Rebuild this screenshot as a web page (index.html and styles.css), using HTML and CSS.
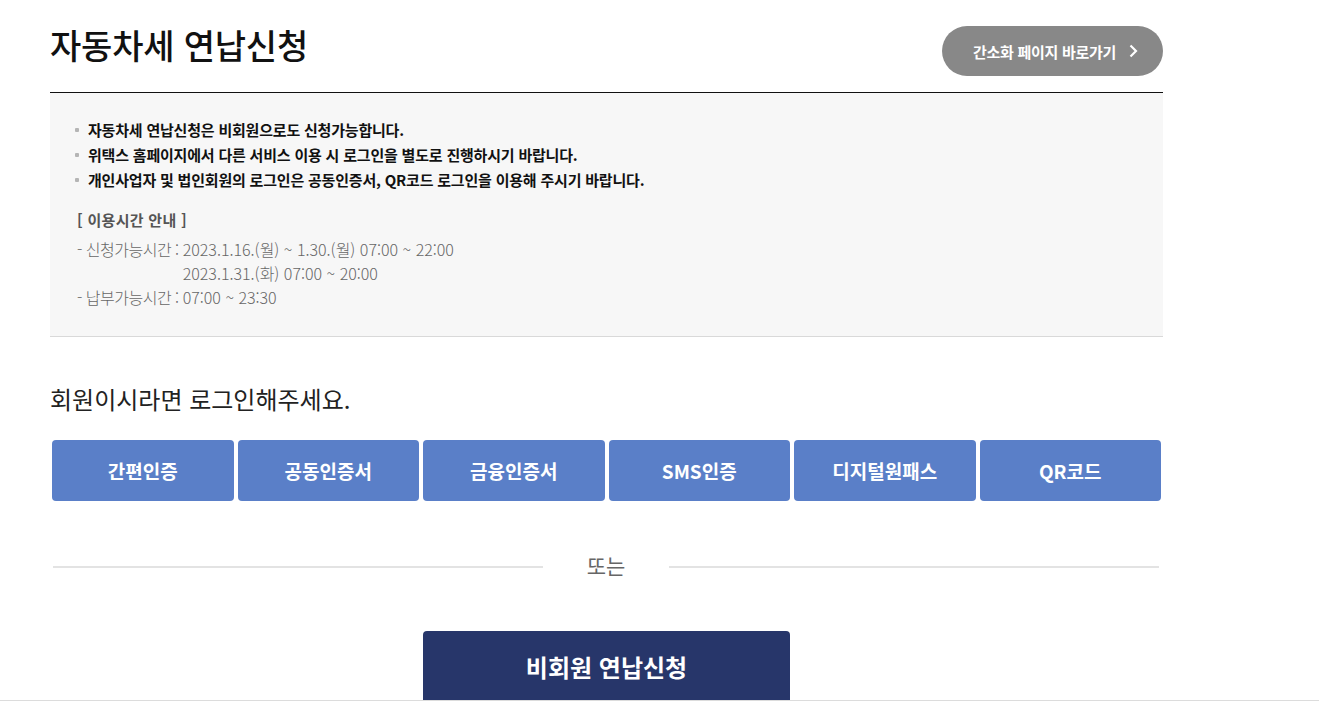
FILE: index.html
```html
<!DOCTYPE html>
<html lang="ko">
<head>
  <meta charset="UTF-8" />
  <title>자동차세 연납신청</title>
  <link rel="stylesheet" href="styles.css">
</head>
<body>
  <div class="wrap">
    <div class="page-head">
      <h1>자동차세 연납신청</h1>
      <a class="simple-btn" href="#">
        <span>간소화 페이지 바로가기</span>
        <svg width="10" height="14" viewBox="0 0 10 14"><polyline points="2.5,1.5 8,7 2.5,12.5" fill="none" stroke="#fff" stroke-width="2.2"/></svg>
      </a>
    </div>

    <div class="notice">
      <ul class="notice-list">
        <li>자동차세 연납신청은 비회원으로도 신청가능합니다.</li>
        <li>위택스 홈페이지에서 다른 서비스 이용 시 로그인을 별도로 진행하시기 바랍니다.</li>
        <li>개인사업자 및 법인회원의 로그인은 공동인증서, QR코드 로그인을 이용해 주시기 바랍니다.</li>
      </ul>
      <div class="time-info">
        <h3>[ 이용시간 안내 ]</h3>
        <div class="time-grid">
          <span class="label">- 신청가능시간 :</span>
          <span>2023.1.16.(월) ~ 1.30.(월) 07:00 ~ 22:00<br>2023.1.31.(화) 07:00 ~ 20:00</span>
          <span class="label">- 납부가능시간 :</span>
          <span>07:00 ~ 23:30</span>
        </div>
      </div>
    </div>

    <p class="login-title">회원이시라면 로그인해주세요.</p>
    <div class="login-btns">
      <button>간편인증</button>
      <button>공동인증서</button>
      <button>금융인증서</button>
      <button>SMS인증</button>
      <button>디지털원패스</button>
      <button>QR코드</button>
    </div>

    <div class="divider">
      <span class="line"></span>
      <span class="or">또는</span>
      <span class="line"></span>
    </div>

    <div class="guest">
      <button class="guest-btn">비회원 연납신청</button>
    </div>
  </div>
  <div class="bottom-bar"></div>
</body>
</html>
```

FILE: styles.css
```css
body {
  margin: 0;
  font-family: "Noto Sans CJK KR", "Noto Sans", sans-serif;
  color: #111;
  background: #fff;
}

.wrap {
  width: 1113px;
  margin-left: 50px;
}

/* header */
.page-head {
  height: 93px;
  box-sizing: border-box;
  padding-top: 25px;
  border-bottom: 1px solid #111;
  display: flex;
  justify-content: space-between;
  align-items: flex-start;
}

.page-head h1 {
  margin: 0;
  font-size: 34px;
  line-height: 40px;
  font-weight: 500;
  letter-spacing: -0.2px;
}

.simple-btn {
  margin-top: 1px;
  width: 221px;
  height: 50px;
  border-radius: 25px;
  background: #888;
  color: #fff;
  text-decoration: none;
  font-size: 15px;
  font-weight: 700;
  letter-spacing: -0.3px;
  display: flex;
  align-items: center;
  justify-content: center;
  gap: 12px;
  padding-left: 6px;
  box-sizing: border-box;
}

/* notice box */
.notice {
  background: #f7f7f7;
  border-bottom: 1px solid #d9d9d9;
  padding: 24px 0 27px 0;
}

.notice-list {
  list-style: none;
  margin: 0;
  padding-left: 38px;
}

.notice-list li {
  font-size: 15px;
  line-height: 25px;
  font-weight: 700;
  letter-spacing: -0.2px;
  color: #111;
  display: flex;
  align-items: center;
}

.notice-list li::before {
  content: "";
  width: 4px;
  height: 4px;
  border-radius: 1px;
  background: #b5b5b5;
  margin-left: -13px;
  margin-right: 9px;
}

.time-info {
  padding-left: 27px;
  margin-top: 16px;
}

.time-info h3 {
  margin: 0 0 5px;
  font-size: 15px;
  line-height: 24px;
  font-weight: 700;
  letter-spacing: 0.3px;
  color: #555;
}

.time-grid {
  display: grid;
  grid-template-columns: auto 1fr;
  column-gap: 4px;
  font-size: 16px;
  line-height: 24px;
  font-weight: 300;
  color: #666;
}

.time-grid .label {
  letter-spacing: -0.5px;
}

/* login */
.login-title {
  margin: 47px 0 26px;
  font-size: 24px;
  line-height: 30px;
  color: #222;
}

.login-btns {
  display: grid;
  grid-template-columns: repeat(6, 1fr);
  gap: 4px;
  padding: 0 2px;
}

.login-btns button {
  height: 61px;
  border: none;
  border-radius: 4px;
  background: #5a7fc8;
  color: #fff;
  font-family: inherit;
  font-size: 19px;
  font-weight: 700;
  cursor: pointer;
}

.divider {
  display: flex;
  align-items: center;
  margin: 49px 4px 0 3px;
}

.divider .line {
  flex: 1;
  height: 2px;
  background: #e3e3e3;
  margin-top: 3px;
}

.divider .or {
  padding: 0 44px;
  font-size: 21px;
  line-height: 30px;
  color: #666;
}

.guest {
  display: flex;
  justify-content: center;
  margin-top: 51px;
}

.guest-btn {
  width: 367px;
  height: 70px;
  border: none;
  border-radius: 4px 4px 0 0;
  background: #27366a;
  color: #fff;
  font-family: inherit;
  font-size: 24px;
  font-weight: 700;
  cursor: pointer;
}

.bottom-bar {
  position: fixed;
  left: 0;
  right: 0;
  bottom: 0;
  height: 6px;
  background: #fff;
  border-top: 1px solid #dcdcdc;
}
```
